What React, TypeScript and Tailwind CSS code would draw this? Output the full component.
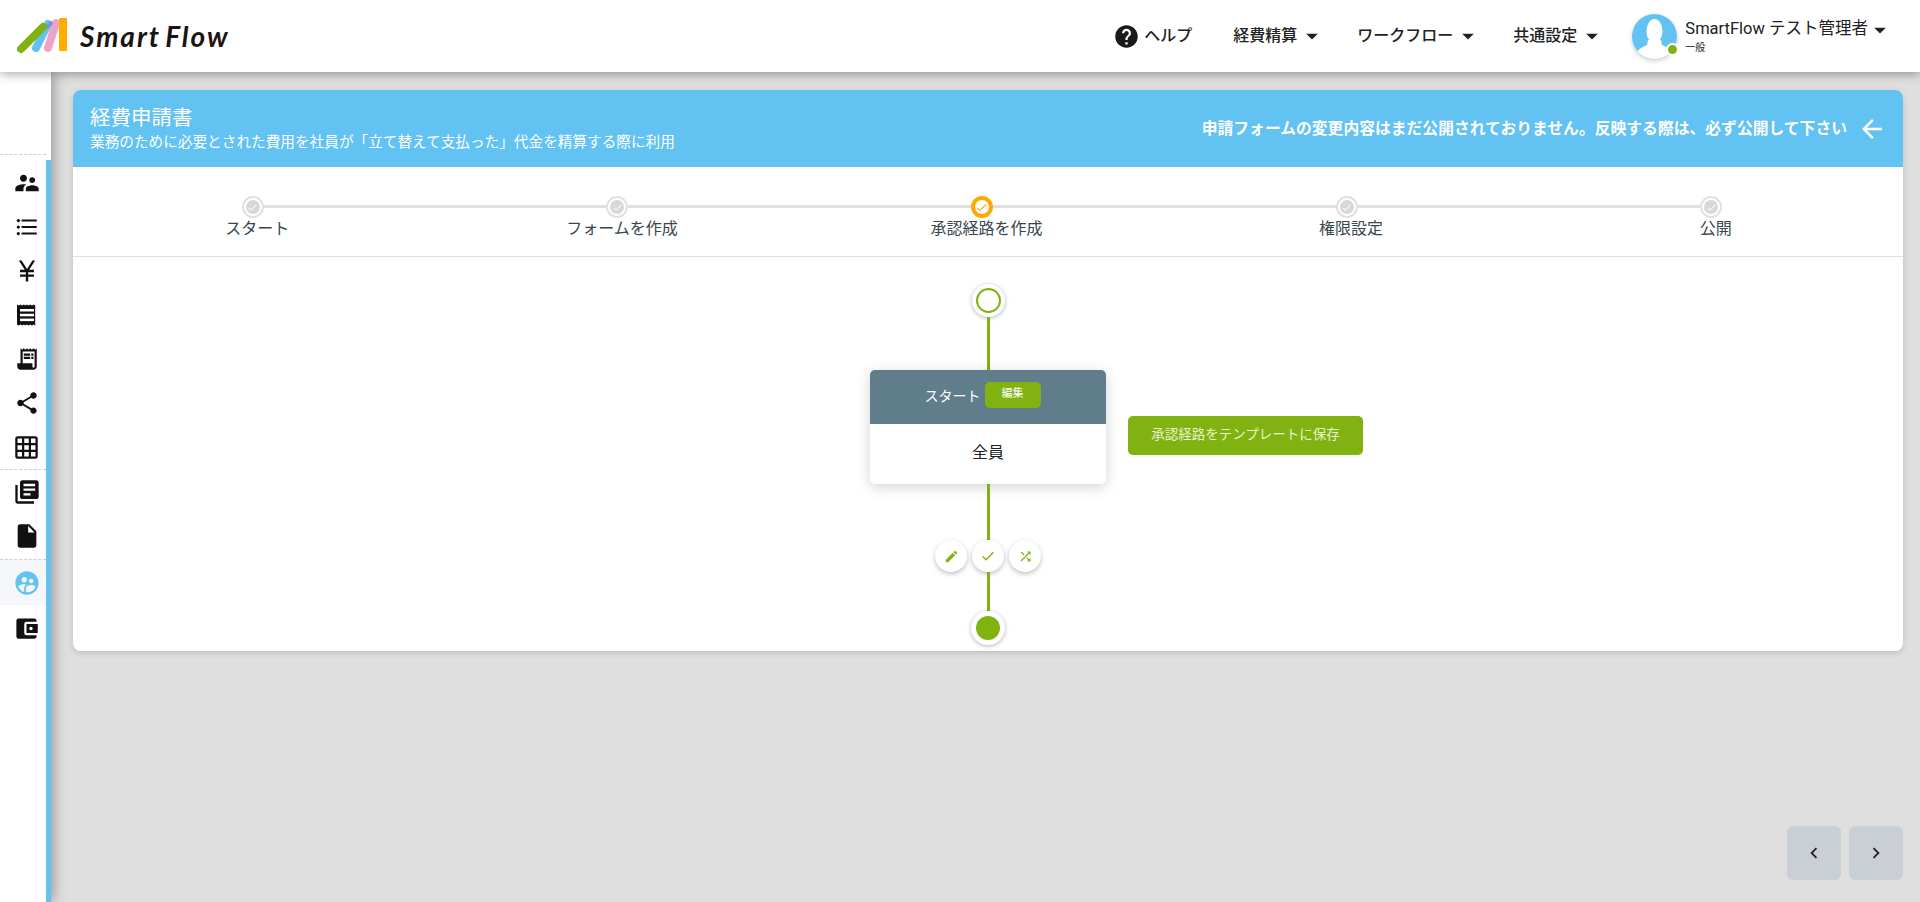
import {
  MdAccountBalanceWallet,
  MdArrowBack,
  MdArrowDropDown,
  MdCheck,
  MdChevronLeft,
  MdChevronRight,
  MdCurrencyYen,
  MdEdit,
  MdFormatListBulleted,
  MdGridOn,
  MdHelp,
  MdInsertDriveFile,
  MdLibraryBooks,
  MdReceiptLong,
  MdShare,
  MdShuffle,
  MdSupervisedUserCircle,
  MdSupervisorAccount,
} from "react-icons/md";

function Logo() {
  return (
    <svg width="54" height="36" viewBox="0 0 54 36" className="shrink-0">
      <line x1="20" y1="30" x2="32" y2="6" stroke="#62c2f2" strokeWidth="8" strokeLinecap="round" />
      <line x1="32" y1="30" x2="40" y2="5" stroke="#eea4c8" strokeWidth="8" strokeLinecap="round" />
      <line x1="31" y1="9" x2="35" y2="5" stroke="#7b93d4" strokeWidth="4" strokeLinecap="round" />
      <line x1="5" y1="31" x2="27" y2="9" stroke="#80b312" strokeWidth="8" strokeLinecap="round" />
      <rect x="43" y="0" width="8" height="33" rx="1" fill="#ffae00" />
    </svg>
  );
}

function NavItem({ label }: { label: string }) {
  return (
    <div className="flex items-center text-[16px] font-medium text-[#212121]">
      <span>{label}</span>
      <MdArrowDropDown size={28} className="ml-[1px] text-[#212121]" />
    </div>
  );
}

function Avatar() {
  return (
    <div className="relative w-[45px] h-[45px] mt-[1px] rounded-full bg-white shadow-[0_2px_5px_rgba(0,0,0,0.2)] shrink-0">
      <svg viewBox="0 0 45 45" className="w-[45px] h-[45px]">
        <clipPath id="avatarClip">
          <circle cx="22.5" cy="22.5" r="22.5" />
        </clipPath>
        <g clipPath="url(#avatarClip)">
          <rect width="45" height="45" fill="#62c2f2" />
          <ellipse cx="22.5" cy="17" rx="8" ry="12" fill="#fff" />
          <path d="M16 26 L29 26 L30 31 Q38 34 42 40 L42 45 L3 45 L3 40 Q7 34 15 31 Z" fill="#fff" />
        </g>
      </svg>
      <span className="absolute right-[-2px] bottom-[3px] w-[13px] h-[13px] rounded-full bg-[#80b312] border-2 border-white" />
    </div>
  );
}

function Header() {
  return (
    <header className="relative z-20 h-[72px] shrink-0 bg-white flex items-center pl-[16px] pr-[26px] shadow-[0_2px_10px_rgba(0,0,0,0.35)]">
      <Logo />
      <div className="ml-[10px] text-[28px] leading-none font-bold italic tracking-[2px] [word-spacing:-4px] text-[#1c1414] font-['Lato',sans-serif]">
        Smart Flow
      </div>
      <div className="ml-auto flex items-center">
        <MdHelp size={27} className="text-[#1a1a1a]" />
        <span className="ml-[4px] text-[16px] font-medium text-[#212121]">ヘルプ</span>
        <div className="ml-[41px]">
          <NavItem label="経費精算" />
        </div>
        <div className="ml-[31px]">
          <NavItem label="ワークフロー" />
        </div>
        <div className="ml-[31px]">
          <NavItem label="共通設定" />
        </div>
        <div className="ml-[26px] flex items-center">
          <Avatar />
          <div className="ml-[8px] flex flex-col">
            <div className="flex items-center h-[22px] -mt-[1px]">
              <span className="text-[16.5px] text-[#212121] leading-none">SmartFlow テスト管理者</span>
              <MdArrowDropDown size={28} className="-ml-[2px] text-[#212121]" />
            </div>
            <span className="text-[10px] leading-[14px] mb-[-2px] text-[#212121]">一般</span>
          </div>
        </div>
      </div>
    </header>
  );
}

function ReceiptIcon() {
  return (
    <svg width="24" height="24" viewBox="0 0 24 24">
      <path
        d="M2 1.5l1.7 1 1.7-1 1.7 1 1.7-1 1.5 1 1.5-1 1.7 1 1.7-1 1.7 1 1.7-1 1.6 1V22.5l-1.6-1-1.7 1-1.7-1-1.7 1-1.7-1-1.5 1-1.5-1-1.7 1-1.7-1-1.7 1-1.7-1z"
        fill="#111"
      />
      <rect x="5" y="6" width="14" height="2.5" fill="#fff" />
      <rect x="5" y="10.8" width="14" height="2.5" fill="#fff" />
      <rect x="5" y="15.6" width="14" height="2.5" fill="#fff" />
    </svg>
  );
}

function SideIcon({ children, active }: { children: React.ReactNode; active?: boolean }) {
  return (
    <div
      className={
        active
          ? "h-[45px] pl-[7px] flex items-center justify-center bg-[#f5f7fa] text-[#62c2f2]"
          : "h-[44px] pl-[7px] flex items-center justify-center text-[#111]"
      }
    >
      {children}
    </div>
  );
}

function Sidebar() {
  return (
    <aside className="relative z-10 w-[51px] shrink-0 bg-white flex flex-col shadow-[3px_0_12px_rgba(0,0,0,0.3)]">
      <div className="h-[83px] shrink-0 w-[46px] border-b border-dashed border-[#cfcfcf]" />
      <div className="flex-1 flex min-h-0">
        <div className="w-[46px] pt-[6px] flex flex-col">
          <SideIcon>
            <MdSupervisorAccount size={28} />
          </SideIcon>
          <SideIcon>
            <MdFormatListBulleted size={26} />
          </SideIcon>
          <SideIcon>
            <MdCurrencyYen size={28} />
          </SideIcon>
          <SideIcon>
            <ReceiptIcon />
          </SideIcon>
          <SideIcon>
            <MdReceiptLong size={26} />
          </SideIcon>
          <SideIcon>
            <MdShare size={26} />
          </SideIcon>
          <SideIcon>
            <MdGridOn size={27} />
          </SideIcon>
          <div className="border-t border-dashed border-[#cfcfcf]" />
          <SideIcon>
            <MdLibraryBooks size={28} />
          </SideIcon>
          <SideIcon>
            <MdInsertDriveFile size={28} />
          </SideIcon>
          <div className="mt-[1px] border-t border-dashed border-[#cfcfcf]" />
          <SideIcon active>
            <MdSupervisedUserCircle size={28} />
          </SideIcon>
          <div className="mt-[1px]">
            <SideIcon>
              <MdAccountBalanceWallet size={27} />
            </SideIcon>
          </div>
        </div>
        <div className="w-[5px] mt-[5px] bg-[#62c2f2]" />
      </div>
    </aside>
  );
}

const steps = ["スタート", "フォームを作成", "承認経路を作成", "権限設定", "公開"];

function Stepper() {
  return (
    <div className="relative pl-[2px] pr-[5px] pt-[29px] pb-[15px] border-b border-[#e0e0e0] grid grid-cols-5">
      <div className="absolute left-[180px] right-[191px] top-[38px] h-[3px] bg-[#e0e0e0]" />
      {steps.map((label, i) => (
        <div key={label} className="flex flex-col items-center">
          {i === 2 ? (
            <div className="relative mr-[9px] w-[22px] h-[22px] rounded-full bg-white border-[4px] border-[#ffa800] flex items-center justify-center">
              <MdCheck size={13} className="text-[#ffa800]" />
            </div>
          ) : (
            <div className="relative mr-[9px] w-[22px] h-[22px] rounded-full bg-white border-2 border-[#e0e0e0] flex items-center justify-center">
              <div className="w-[14px] h-[14px] rounded-full bg-[#d8d8d8] flex items-center justify-center">
                <MdCheck size={11} className="text-white" />
              </div>
            </div>
          )}
          <div className="h-[24px] mt-[-1px] text-[16px] leading-[24px] text-[#37474f]">{label}</div>
        </div>
      ))}
    </div>
  );
}

function ActionButton({ children }: { children: React.ReactNode }) {
  return (
    <div className="w-[32px] h-[32px] rounded-full bg-white flex items-center justify-center text-[#80b312] shadow-[0_2px_5px_rgba(0,0,0,0.25)]">
      {children}
    </div>
  );
}

function Flow() {
  return (
    <div className="pt-[27px] pb-[6px] flex flex-col items-center">
      <div className="w-[33px] h-[33px] rounded-full bg-white shadow-[0_1px_4px_rgba(0,0,0,0.3)] flex items-center justify-center">
        <div className="w-[25px] h-[25px] rounded-full border-[2.5px] border-[#80b312]" />
      </div>
      <div className="w-[3px] h-[53px] bg-[#80b312]" />
      <div className="w-full grid grid-cols-[1fr_236px_1fr]">
        <div />
        <div className="rounded-[5px] overflow-hidden bg-white shadow-[0_3px_14px_rgba(0,0,0,0.18)]">
          <div className="h-[54px] pr-[10px] pb-[2px] bg-[#607d8b] flex items-center justify-center text-white">
            <span className="text-[14px] ml-[-1px]">スタート</span>
            <span className="ml-[4px] w-[56px] h-[26px] rounded-[5px] bg-[#80b312] flex items-center justify-center text-[11px] text-white mt-[-3px]">
              編集
            </span>
          </div>
          <div className="h-[60px] flex items-center justify-center text-[16px] text-[#212121] pb-[2px]">全員</div>
        </div>
        <div className="flex items-start pt-[46px] pl-[22px]">
          <button className="w-[235px] h-[39px] rounded-[5px] bg-[#80b312] text-[#e8f2c8] text-[13.5px] pb-[3px]">
            承認経路をテンプレートに保存
          </button>
        </div>
      </div>
      <div className="w-[3px] h-[56px] bg-[#80b312]" />
      <div className="flex items-center gap-[5px]">
        <ActionButton>
          <MdEdit size={15} />
        </ActionButton>
        <ActionButton>
          <MdCheck size={16} />
        </ActionButton>
        <ActionButton>
          <MdShuffle size={15} />
        </ActionButton>
      </div>
      <div className="w-[3px] h-[39px] bg-[#80b312]" />
      <div className="w-[34px] h-[34px] rounded-full bg-white shadow-[0_1px_4px_rgba(0,0,0,0.3)] flex items-center justify-center">
        <div className="w-[24px] h-[24px] rounded-full bg-[#80b312]" />
      </div>
    </div>
  );
}

function App() {
  return (
    <div className="h-screen overflow-hidden flex flex-col bg-[#dfdfdf] font-['Roboto','Noto_Sans_CJK_JP',sans-serif]">
      <Header />
      <div className="flex-1 flex min-h-0">
        <Sidebar />
        <main className="flex-1 min-w-0 pl-[22px] pr-[17px] pt-[18px] pb-[22px] flex flex-col justify-between">
          <section className="rounded-[8px] overflow-hidden bg-white shadow-[0_2px_6px_rgba(0,0,0,0.15)]">
            {/*Title*/}
            <div className="h-[77px] bg-[#62c2f2] text-white pl-[17px] pr-[16px] flex items-center justify-between">
              <div className="flex flex-col pb-[2px]">
                <span className="text-[20.5px] leading-[28px]">経費申請書</span>
                <span className="text-[14.65px] leading-[20px]">
                  業務のために必要とされた費用を社員が「立て替えて支払った」代金を精算する際に利用
                </span>
              </div>
              <div className="flex items-center">
                <span className="text-[15.8px] font-bold">
                  申請フォームの変更内容はまだ公開されておりません。反映する際は、必ず公開して下さい
                </span>
                <MdArrowBack size={30} className="ml-[10px]" />
              </div>
            </div>
            <Stepper />
            <Flow />
          </section>
          <div className="flex justify-end gap-[8px]">
            <button className="w-[54px] h-[54px] rounded-[6px] bg-[#c9cfd4] flex items-center justify-center text-[#212121]">
              <MdChevronLeft size={22} />
            </button>
            <button className="w-[54px] h-[54px] rounded-[6px] bg-[#c9cfd4] flex items-center justify-center text-[#212121]">
              <MdChevronRight size={22} />
            </button>
          </div>
        </main>
      </div>
    </div>
  );
}

export default App;
